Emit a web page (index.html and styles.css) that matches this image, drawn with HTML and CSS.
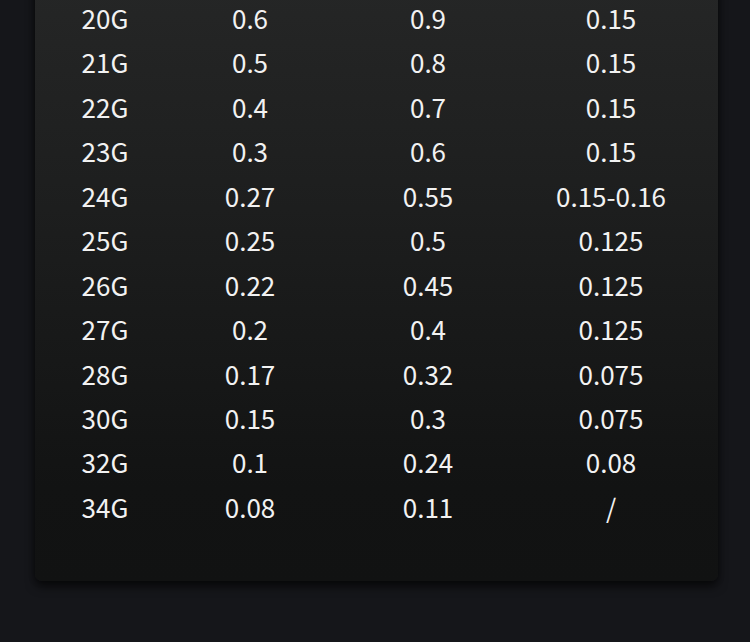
FILE: index.html
```html
<!DOCTYPE html>
<html>
<head>
<meta charset="utf-8">
<link rel="stylesheet" href="styles.css">
</head>
<body>
<div class="card">
  <div class="table">
    <div class="row"><span>20G</span><span>0.6</span><span>0.9</span><span>0.15</span></div>
    <div class="row"><span>21G</span><span>0.5</span><span>0.8</span><span>0.15</span></div>
    <div class="row"><span>22G</span><span>0.4</span><span>0.7</span><span>0.15</span></div>
    <div class="row"><span>23G</span><span>0.3</span><span>0.6</span><span>0.15</span></div>
    <div class="row"><span>24G</span><span>0.27</span><span>0.55</span><span>0.15-0.16</span></div>
    <div class="row"><span>25G</span><span>0.25</span><span>0.5</span><span>0.125</span></div>
    <div class="row"><span>26G</span><span>0.22</span><span>0.45</span><span>0.125</span></div>
    <div class="row"><span>27G</span><span>0.2</span><span>0.4</span><span>0.125</span></div>
    <div class="row"><span>28G</span><span>0.17</span><span>0.32</span><span>0.075</span></div>
    <div class="row"><span>30G</span><span>0.15</span><span>0.3</span><span>0.075</span></div>
    <div class="row"><span>32G</span><span>0.1</span><span>0.24</span><span>0.08</span></div>
    <div class="row"><span>34G</span><span>0.08</span><span>0.11</span><span>/</span></div>
  </div>
</div>
</body>
</html>
```
FILE: styles.css
```css
html, body {
  margin: 0;
  padding: 0;
  background: #15161a;
  width: 750px;
  height: 642px;
  overflow: hidden;
}
body {
  font-family: "Noto Sans CJK SC", "Noto Sans", sans-serif;
  color: #f2f2f2;
}
.card {
  margin: -40px 32px 0 35px;
  width: 683px;
  padding: 36px 0 52px;
  border-radius: 0 0 7px 7px;
  background: linear-gradient(180deg, #262727 0%, #1d1e1e 40%, #121313 85%, #111212 100%);
  box-shadow: 0 6px 10px rgba(0, 0, 0, 0.55), 0 0 6px rgba(0, 0, 0, 0.4);
}
.table {
  display: flex;
  flex-direction: column;
}
.row {
  display: grid;
  grid-template-columns: 140px 150px 206px 160px;
  height: 44.45px;
  line-height: 44.45px;
  font-size: 26px;
}
.row span {
  text-align: center;
  white-space: nowrap;
}
```
